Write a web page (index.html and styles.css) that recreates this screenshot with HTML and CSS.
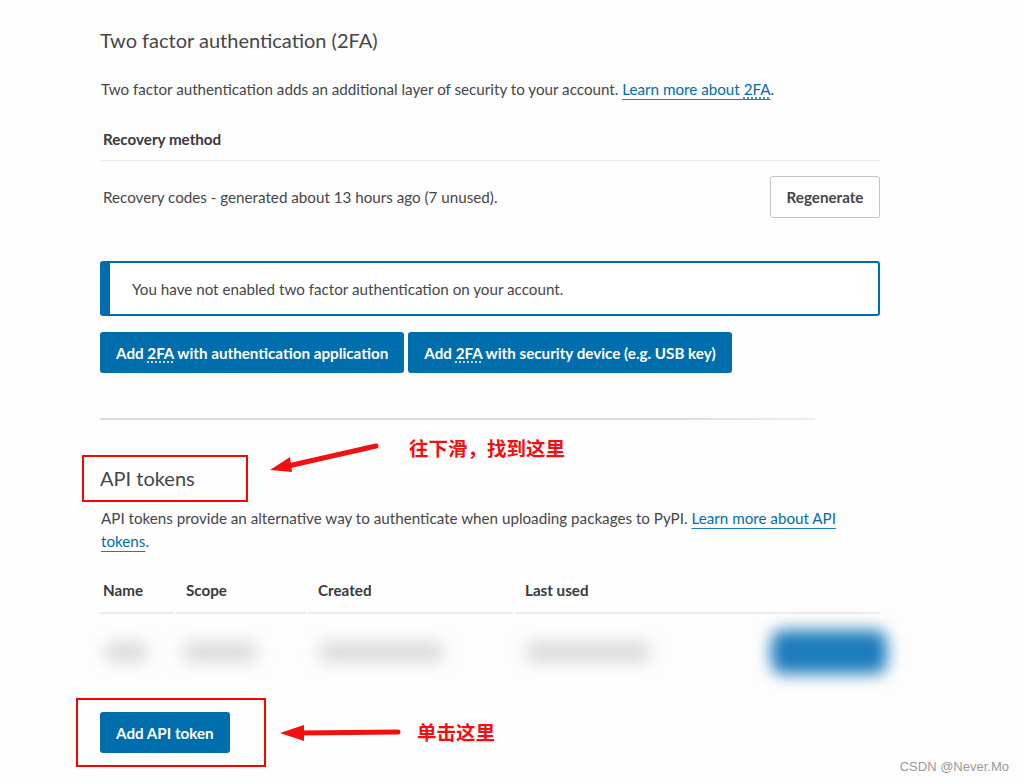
FILE: index.html
```html
<!DOCTYPE html>
<html lang="en">
<head>
<meta charset="utf-8">
<title>Account settings</title>
<link rel="stylesheet" href="styles.css">
</head>
<body>
<div class="page">
  <section class="section">
    <h2 class="title">Two factor authentication (2FA)</h2>
    <p class="text">Two factor authentication adds an additional layer of security to your account. <a class="link" href="#">Learn more about <abbr class="abbr">2FA</abbr></a>.</p>
    <div class="recovery">
      <div class="recovery-head">Recovery method</div>
      <div class="recovery-row">
        <span>Recovery codes - generated about 13 hours ago (7 unused).</span>
        <button class="btn">Regenerate</button>
      </div>
    </div>
    <div class="callout">You have not enabled two factor authentication on your account.</div>
    <div class="btn-row">
      <button class="btn primary">Add <abbr class="abbr">2FA</abbr> with authentication application</button>
      <button class="btn primary">Add <abbr class="abbr">2FA</abbr> with security device (e.g. USB key)</button>
    </div>
  </section>
  <hr class="divider">
  <section class="section tokens">
    <h2 class="title">API tokens</h2>
    <p class="text narrow">API tokens provide an alternative way to authenticate when uploading packages to PyPI. <a class="link" href="#">Learn more about API</a><br><a class="link" href="#">tokens</a>.</p>
    <div class="token-table">
      <div class="th first">Name</div>
      <div class="th">Scope</div>
      <div class="th">Created</div>
      <div class="th">Last used</div>
      <div class="td"><span class="blur b1"></span></div>
      <div class="td"><span class="blur b2"></span></div>
      <div class="td"><span class="blur b3"></span></div>
      <div class="td last"><span class="blur b4"></span><span class="blur bbtn"></span></div>
    </div>
    <button class="btn primary add">Add API token</button>
  </section>

  <div class="annot box1"></div>
  <div class="annot box2"></div>
  <svg class="arrow arrow1" width="130" height="40" viewBox="0 0 130 40">
    <path d="M110 7 L22 27" stroke="#f01010" stroke-width="5" stroke-linecap="round" fill="none"/>
    <path d="M4 31 L24 18 L26 33 Z" fill="#f01010"/>
  </svg>
  <span class="note note1">往下滑，找到这里</span>
  <svg class="arrow arrow2" width="130" height="24" viewBox="0 0 130 24">
    <path d="M120 11 L22 12" stroke="#f01010" stroke-width="5" stroke-linecap="round" fill="none"/>
    <path d="M2 12 L26 4 L26 20 Z" fill="#f01010"/>
  </svg>
  <span class="note note2">单击这里</span>
  <span class="watermark">CSDN @Never.Mo</span>
</div>
</body>
</html>
```
FILE: styles.css
```css
* { box-sizing: border-box; }
html, body { margin: 0; padding: 0; background: #fdfdfd; }
body {
  font-family: Lato, "Open Sans", sans-serif;
  color: #464646;
  font-size: 15.2px;
}
.page {
  position: relative;
  width: 1023px;
  height: 783px;
  padding: 0 143px 0 100px;
  overflow: hidden;
}
.section { width: 780px; }
.title {
  margin: 0;
  padding-top: 28px;
  font-size: 20px;
  font-weight: 400;
  line-height: 24px;
  color: #464646;
}
.text {
  margin: 26px 0 0 1px;
  line-height: 23px;
}
.narrow { width: 745px; }
.link { color: #006dad; text-decoration: underline; text-underline-offset: 4px; text-decoration-color: #1c7bb9; }
.abbr { text-decoration: underline dotted; text-underline-offset: 3px; }
.recovery { margin-top: 28px; margin-left: 1px; }
.recovery-head {
  font-weight: 700;
  color: #3a3a3a;
  padding: 0 2px 11px;
  line-height: 20px;
  border-bottom: 1px solid #e8e8e8;
}
.recovery-row {
  display: flex;
  justify-content: space-between;
  align-items: center;
  padding: 15px 0 0 2px;
}
.btn {
  font-family: inherit;
  font-size: 15.2px;
  font-weight: 700;
  border-radius: 3px;
  cursor: pointer;
  white-space: nowrap;
}
.recovery-row .btn {
  background: #fff;
  border: 1px solid #c4c4c4;
  color: #464646;
  height: 42px;
  width: 110px;
  padding: 0;
}
.callout {
  margin-top: 43px;
  height: 55px;
  border: 2px solid #006dad;
  border-left-width: 10px;
  border-radius: 3px;
  padding: 0 0 0 22px;
  display: flex;
  align-items: center;
  background: #fff;
}
.btn-row { display: flex; gap: 4px; margin-top: 16px; }
.btn.primary {
  background: #006dad;
  color: #fff;
  border: 0;
  height: 41px;
  padding: 0 16px;
}
.divider {
  border: 0;
  height: 2px;
  background: linear-gradient(to right, #dcdcdc 80%, #efefef);
  margin: 45px 0 0;
  width: 715px;
}
.tokens .title { padding-top: 46px; }
.tokens .text { margin-top: 17px; }
.token-table {
  margin-top: 27px;
  display: grid;
  grid-template-columns: 74px 130px 205px 365px;
  column-gap: 2px;
}
.th {
  font-weight: 700;
  color: #3a3a3a;
  padding: 0 10px 12px;
  line-height: 20px;
  border-bottom: 2px solid #ececec;
}
.th.first { padding-left: 3px; }
.td { height: 70px; position: relative; }
.blur {
  position: absolute;
  background: #dadada;
  filter: blur(8px);
  border-radius: 12px;
}
.b1 { left: 4px; top: 28px; width: 44px; height: 20px; }
.b2 { left: 6px; top: 28px; width: 76px; height: 20px; }
.b3 { left: 10px; top: 28px; width: 126px; height: 20px; }
.b4 { left: 10px; top: 28px; width: 126px; height: 20px; }
.bbtn { left: 256px; top: 16px; width: 116px; height: 44px; background: #1d7cbc; }
.add { margin-top: 28px; height: 40px; }

.annot { position: absolute; border: 2px solid #f00; }
.box1 { left: 82px; top: 455px; width: 166px; height: 47px; }
.box2 { left: 76px; top: 698px; width: 190px; height: 69px; }
.arrow { position: absolute; }
.arrow1 { left: 266px; top: 439px; }
.arrow2 { left: 278px; top: 721px; }
.note {
  position: absolute;
  color: #f01010;
  font-family: "Noto Sans CJK SC", sans-serif;
  font-weight: 700;
  font-size: 19.5px;
  line-height: 24px;
}
.note1 { left: 409px; top: 436px; }
.note2 { left: 417px; top: 720px; }
.watermark {
  position: absolute;
  right: 14px;
  top: 759px;
  font-family: "Liberation Sans", sans-serif;
  font-size: 13px;
  color: #9a9a9a;
}
```
